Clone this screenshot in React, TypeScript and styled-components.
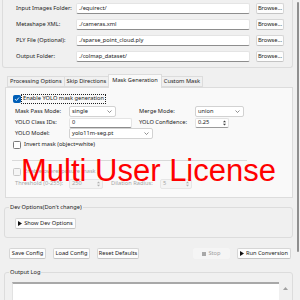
import React from "react";
import styled, { createGlobalStyle } from "styled-components";

const GlobalStyle = createGlobalStyle`
  * { box-sizing: border-box; }
  html, body { margin: 0; padding: 0; background: #f0f0f0; }
  body {
    font-family: "Noto Sans", "Open Sans", sans-serif;
    font-size: 5.7px;
    line-height: 1;
    color: #1b1b1b;
  }
`;

const Window = styled.div`
  position: relative;
  width: 300px;
  height: 300px;
  overflow: hidden;
  padding: 0 7px 0 2px;
  display: flex;
  flex-direction: column;
`;

const PathsGroup = styled.div`
  border: 1px solid #dcdcdc;
  border-top: none;
  border-radius: 0 0 3px 3px;
  padding: 3px 0 5px 13px;
  display: grid;
  grid-template-columns: 54px 174px 28px;
  grid-auto-rows: 11px;
  column-gap: 6px;
  row-gap: 5px;
  align-items: center;
`;

const Label = styled.span<{ $w?: number; $disabled?: boolean; $ml?: number }>`
  flex: none;
  width: ${(p) => (p.$w ? `${p.$w}px` : "auto")};
  margin-left: ${(p) => p.$ml ?? 0}px;
  color: ${(p) => (p.$disabled ? "#a6a6a6" : "#1b1b1b")};
  white-space: nowrap;
`;

const Entry = styled.div<{ $w?: number; $h?: number }>`
  flex: none;
  width: ${(p) => (p.$w ? `${p.$w}px` : "auto")};
  height: ${(p) => p.$h ?? 11}px;
  background: #ffffff;
  border: 1px solid #e4e4e4;
  border-bottom-color: #8d8d8d;
  border-radius: 2px;
  padding-left: 2px;
  display: flex;
  align-items: center;
  white-space: nowrap;
  overflow: hidden;
`;

const Button = styled.div<{ $w: number; $disabled?: boolean }>`
  flex: none;
  width: ${(p) => p.$w}px;
  height: 11px;
  background: ${(p) => (p.$disabled ? "#f5f5f5" : "#fdfdfd")};
  border: 1px solid ${(p) => (p.$disabled ? "#f5f5f5" : "#d6d6d6")};
  border-bottom-color: ${(p) => (p.$disabled ? "#f5f5f5" : "#c4c4c4")};
  border-radius: 2px;
  color: ${(p) => (p.$disabled ? "#a0a0a0" : "#1b1b1b")};
  display: flex;
  align-items: center;
  justify-content: center;
  gap: 2px;
  white-space: nowrap;
`;

const Notebook = styled.div`
  margin: 6px 0 0 3px;
  display: flex;
  flex-direction: column;
`;

const TabStrip = styled.div`
  height: 13px;
  display: flex;
  align-items: flex-end;
  padding-left: 3px;
`;

const Tab = styled.div<{ $active?: boolean; $pad: number }>`
  position: relative;
  height: ${(p) => (p.$active ? 14 : 11)}px;
  margin-bottom: ${(p) => (p.$active ? -1 : 0)}px;
  margin-left: -1px;
  padding: 0 ${(p) => p.$pad}px;
  background: ${(p) => (p.$active ? "#f9f9f9" : "#f0f0f0")};
  border: 1px solid #dcdcdc;
  border-bottom: ${(p) => (p.$active ? "none" : "1px solid #dcdcdc")};
  z-index: ${(p) => (p.$active ? 2 : 1)};
  display: flex;
  align-items: ${(p) => (p.$active ? "flex-start" : "center")};
  padding-top: ${(p) => (p.$active ? 3 : 0)}px;
  white-space: nowrap;
`;

const Pane = styled.div`
  border: 1px solid #dcdcdc;
  background: #f9f9f9;
  padding: 5px 0 8px 0;
  display: flex;
  flex-direction: column;
`;

const CheckRow = styled.div<{ $mt?: number; $h?: number }>`
  height: ${(p) => p.$h ?? 10}px;
  margin-top: ${(p) => p.$mt ?? 0}px;
  padding-left: 7px;
  display: flex;
  align-items: center;
`;

const Box = styled.span<{ $checked?: boolean; $disabled?: boolean }>`
  flex: none;
  width: 8px;
  height: 8px;
  border-radius: 1.5px;
  background: ${(p) => (p.$checked ? "#005fb8" : p.$disabled ? "#f5f5f5" : "#ffffff")};
  border: 1px solid
    ${(p) => (p.$checked ? "#005fb8" : p.$disabled ? "#c8c8c8" : "#7a7a7a")};
  display: flex;
  align-items: center;
  justify-content: center;
`;

const FocusLabel = styled.span`
  height: 10px;
  padding: 0 1px;
  border: 1px dotted #202020;
  display: flex;
  align-items: center;
  white-space: nowrap;
`;

const FormRows = styled.div`
  margin-top: 2px;
  display: flex;
  flex-direction: column;
`;

const FormRow = styled.div`
  height: 11px;
  padding-left: 9px;
  display: flex;
  align-items: center;
`;

const FieldSlot = styled.div<{ $w: number }>`
  flex: none;
  width: ${(p) => p.$w}px;
  display: flex;
  align-items: center;
`;

const Combo = styled.div<{ $w: number }>`
  flex: none;
  width: ${(p) => p.$w}px;
  height: 11px;
  background: #ffffff;
  border: 1px solid #d2d2d2;
  border-radius: 2px;
  padding: 0 3px 0 2px;
  display: flex;
  align-items: center;
  justify-content: space-between;
  white-space: nowrap;
`;

const Spin = styled.div<{ $w: number; $disabled?: boolean }>`
  flex: none;
  width: ${(p) => p.$w}px;
  height: 10px;
  background: ${(p) => (p.$disabled ? "#f4f4f4" : "#ffffff")};
  border: 1px solid ${(p) => (p.$disabled ? "#e6e6e6" : "#e2e2e2")};
  border-bottom-color: ${(p) => (p.$disabled ? "#e6e6e6" : "#9a9a9a")};
  border-radius: 2px;
  padding: 0 2px 0 2px;
  color: ${(p) => (p.$disabled ? "#a6a6a6" : "#1b1b1b")};
  display: flex;
  align-items: center;
  justify-content: space-between;
`;

const Separator = styled.div`
  margin: 10px 0 0 6px;
  width: 235px;
  height: 1px;
  background: #d9d9d9;
`;

const Group = styled.fieldset<{ $mt: number; $pb: number }>`
  margin: ${(p) => p.$mt}px 0 0 2px;
  padding: 0 0 ${(p) => p.$pb}px 0;
  border: 1px solid #dcdcdc;
  border-radius: 3px;
  min-width: 0;
`;

const Legend = styled.legend`
  margin-left: 4px;
  padding: 0 1px;
  height: 8px;
  line-height: 8px;
  white-space: nowrap;
`;

const DevButtonWrap = styled.div`
  margin: 7px 0 0 10px;
  display: flex;
`;

const ActionBar = styled.div`
  margin-top: 10px;
  padding: 0 2px 0 7px;
  display: flex;
  align-items: center;
  gap: 7px;
`;

const Spacer = styled.div`
  flex: 1;
`;

const LogArea = styled.div`
  margin: 6px 0 0 7px;
  height: 40px;
  display: flex;
`;

const LogText = styled.div`
  width: 267px;
  height: 40px;
  background: #ffffff;
  border-top: 2px solid #a8a8a8;
  border-left: 1px solid #e2e2e2;
`;

const LogScroll = styled.div`
  flex: 1;
  padding: 4px 0 0 4px;
`;

const PageScroll = styled.div`
  position: absolute;
  top: 2px;
  right: 1px;
  width: 2px;
  height: 250px;
  border-radius: 1px;
  background: #8f8f8f;
`;

const Watermark = styled.div`
  position: absolute;
  left: 21px;
  top: 155px;
  font-family: "Liberation Sans", Arial, sans-serif;
  font-size: 31px;
  line-height: 31px;
  color: #ff0000;
  white-space: nowrap;
  pointer-events: none;
  z-index: 10;
`;

const Chevron = () => (
  <svg width="5" height="3" viewBox="0 0 5 3">
    <polyline points="0.5,0.5 2.5,2.5 4.5,0.5" fill="none" stroke="#606060" strokeWidth="0.7" />
  </svg>
);

const Arrows = ({ color = "#404040" }: { color?: string }) => (
  <svg width="3" height="6" viewBox="0 0 3 6">
    <polygon points="0,2.3 1.5,0.5 3,2.3" fill={color} />
    <polygon points="0,3.7 1.5,5.5 3,3.7" fill={color} />
  </svg>
);

const Check = () => (
  <svg width="6" height="6" viewBox="0 0 6 6">
    <polyline points="1,3.1 2.4,4.5 5,1.5" fill="none" stroke="#ffffff" strokeWidth="0.9" />
  </svg>
);

const Play = () => (
  <svg width="4" height="5" viewBox="0 0 4 5">
    <polygon points="0,0 4,2.5 0,5" fill="#111" />
  </svg>
);

const StopIcon = () => (
  <svg width="4" height="4" viewBox="0 0 4 4">
    <rect width="4" height="4" fill="#a8a8a8" />
  </svg>
);

const paths = [
  ["Input Images Folder:", "./equirect/"],
  ["Metashape XML:", "./cameras.xml"],
  ["PLY File (Optional):", "./sparse_point_cloud.ply"],
  ["Output Folder:", "./colmap_dataset/"],
];

export default function App() {
  return (
    <>
      <GlobalStyle />
      <Window>
        <PathsGroup>
          {paths.map(([label, value]) => (
            <React.Fragment key={label}>
              <Label>{label}</Label>
              <Entry>{value}</Entry>
              <Button $w={28}>Browse...</Button>
            </React.Fragment>
          ))}
        </PathsGroup>

        <Notebook>
          <TabStrip>
            <Tab $pad={2}>Processing Options</Tab>
            <Tab $pad={2}>Skip Directions</Tab>
            <Tab $pad={3} $active>
              Mask Generation
            </Tab>
            <Tab $pad={2}>Custom Mask</Tab>
          </TabStrip>
          <Pane>
            <CheckRow $h={11}>
              <Box $checked>
                <Check />
              </Box>
              <FocusLabel>Enable YOLO mask generation</FocusLabel>
            </CheckRow>
            <FormRows>
              <FormRow>
                <Label $w={54}>Mask Pass Mode:</Label>
                <FieldSlot $w={70}>
                  <Combo $w={47}>
                    single <Chevron />
                  </Combo>
                </FieldSlot>
                <Label $w={56}>Merge Mode:</Label>
                <Combo $w={49}>
                  union <Chevron />
                </Combo>
              </FormRow>
              <FormRow>
                <Label $w={54}>YOLO Class IDs:</Label>
                <FieldSlot $w={70}>
                  <Entry $w={63} $h={10}>
                    0
                  </Entry>
                </FieldSlot>
                <Label $w={56}>YOLO Confidence:</Label>
                <Spin $w={34}>
                  0.25 <Arrows />
                </Spin>
              </FormRow>
              <FormRow>
                <Label $w={54}>YOLO Model:</Label>
                <Combo $w={84}>
                  yolo11m-seg.pt <Chevron />
                </Combo>
              </FormRow>
            </FormRows>
            <CheckRow $mt={1}>
              <Box />
              <Label $ml={3}>Invert mask (object=white)</Label>
            </CheckRow>
            <Separator />
            <CheckRow $mt={6}>
              <Box $disabled />
              <Label $ml={3} $disabled>
                Enable overexposure mask
              </Label>
            </CheckRow>
            <FormRow style={{ marginTop: 2, height: 10 }}>
              <Label $w={54} $disabled>
                Threshold (0-255):
              </Label>
              <Spin $w={34} $disabled>
                250 <Arrows color="#b0b0b0" />
              </Spin>
              <Label $w={49} $ml={8} $disabled>
                Dilation Radius:
              </Label>
              <Spin $w={32} $disabled>
                5 <Arrows color="#b0b0b0" />
              </Spin>
            </FormRow>
          </Pane>
        </Notebook>

        <Group $mt={5} $pb={8}>
          <Legend>Dev Options(Don't change)</Legend>
          <DevButtonWrap>
            <Button $w={61}>
              <Play /> Show Dev Options
            </Button>
          </DevButtonWrap>
        </Group>

        <ActionBar>
          <Button $w={37}>Save Config</Button>
          <Button $w={37}>Load Config</Button>
          <Button $w={42}>Reset Defaults</Button>
          <Spacer />
          <Button $w={37} $disabled>
            <StopIcon /> Stop
          </Button>
          <Button $w={54}>
            <Play /> Run Conversion
          </Button>
        </ActionBar>

        <Group $mt={9} $pb={0}>
          <Legend>Output Log</Legend>
          <LogArea>
            <LogText />
            <LogScroll>
              <svg width="5" height="3" viewBox="0 0 5 3">
                <polygon points="0,3 2.5,0 5,3" fill="#a0a0a0" />
              </svg>
            </LogScroll>
          </LogArea>
        </Group>

        <PageScroll />
        <Watermark>Multi User License</Watermark>
      </Window>
    </>
  );
}
